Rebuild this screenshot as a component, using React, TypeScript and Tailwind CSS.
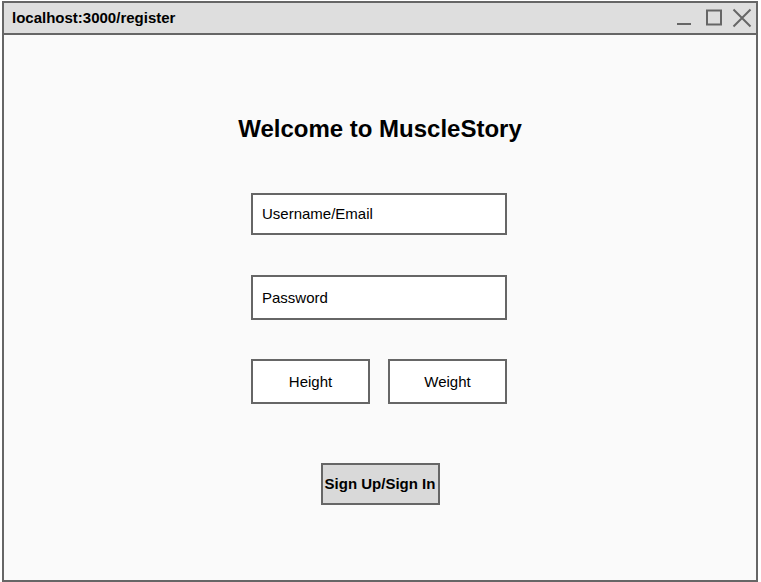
export default function App() {
  return (
    <div className="h-[582px] w-[761px] bg-white pl-[2px] pt-[1px] font-['Liberation_Sans',Arial,sans-serif]">
      <div className="flex h-[581px] w-[756px] flex-col border-2 border-[#666666] bg-[#fafafa]">
        {/* title bar */}
        <div className="flex h-[32px] shrink-0 items-center justify-between border-b-2 border-[#666666] bg-[#dedede] pl-[8px] pr-[4px]">
          <span className="text-[15px] font-bold text-black">localhost:3000/register</span>
          <div className="flex items-center gap-[8px] text-[#666666]">
            <svg width="20" height="20" viewBox="0 0 20 20" fill="none" stroke="currentColor" strokeWidth="2">
              <path d="M1 16h14" />
            </svg>
            <svg width="20" height="20" viewBox="0 0 20 20" fill="none" stroke="currentColor" strokeWidth="2">
              <rect x="3" y="2.5" width="14" height="14" />
            </svg>
            <svg width="20" height="20" viewBox="0 0 20 20" fill="none" stroke="currentColor" strokeWidth="2">
              <path d="M1.5 1.5l17 17M18.5 1.5l-17 17" />
            </svg>
          </div>
        </div>

        {/* form */}
        <div className="flex flex-col items-center pr-[2px] pt-[80px]">
          <h1 className="ml-[2px] h-[28px] text-[24px] font-bold leading-[28px] text-black">Welcome to MuscleStory</h1>

          <div className="mt-[50px] flex h-[42px] w-[256px] items-center border-2 border-[#666666] bg-white px-[9px] pt-[1px] text-[15px] text-black">
            Username/Email
          </div>

          <div className="mt-[40px] flex h-[45px] w-[256px] items-center border-2 border-[#666666] bg-white px-[9px] pt-[1px] text-[15px] text-black">
            Password
          </div>

          <div className="mt-[39px] flex w-[256px] justify-between">
            <div className="flex h-[45px] w-[119px] items-center justify-center border-2 border-[#666666] bg-white pt-[1px] text-[15px] text-black">
              Height
            </div>
            <div className="flex h-[45px] w-[119px] items-center justify-center border-2 border-[#666666] bg-white pt-[1px] text-[15px] text-black">
              Weight
            </div>
          </div>

          <button className="ml-[2px] mt-[59px] flex h-[42px] w-[119px] items-center justify-center border-2 border-[#666666] bg-[#d9d9d9] text-[15px] font-bold text-black">
            Sign Up/Sign In
          </button>
        </div>
      </div>
    </div>
  );
}
